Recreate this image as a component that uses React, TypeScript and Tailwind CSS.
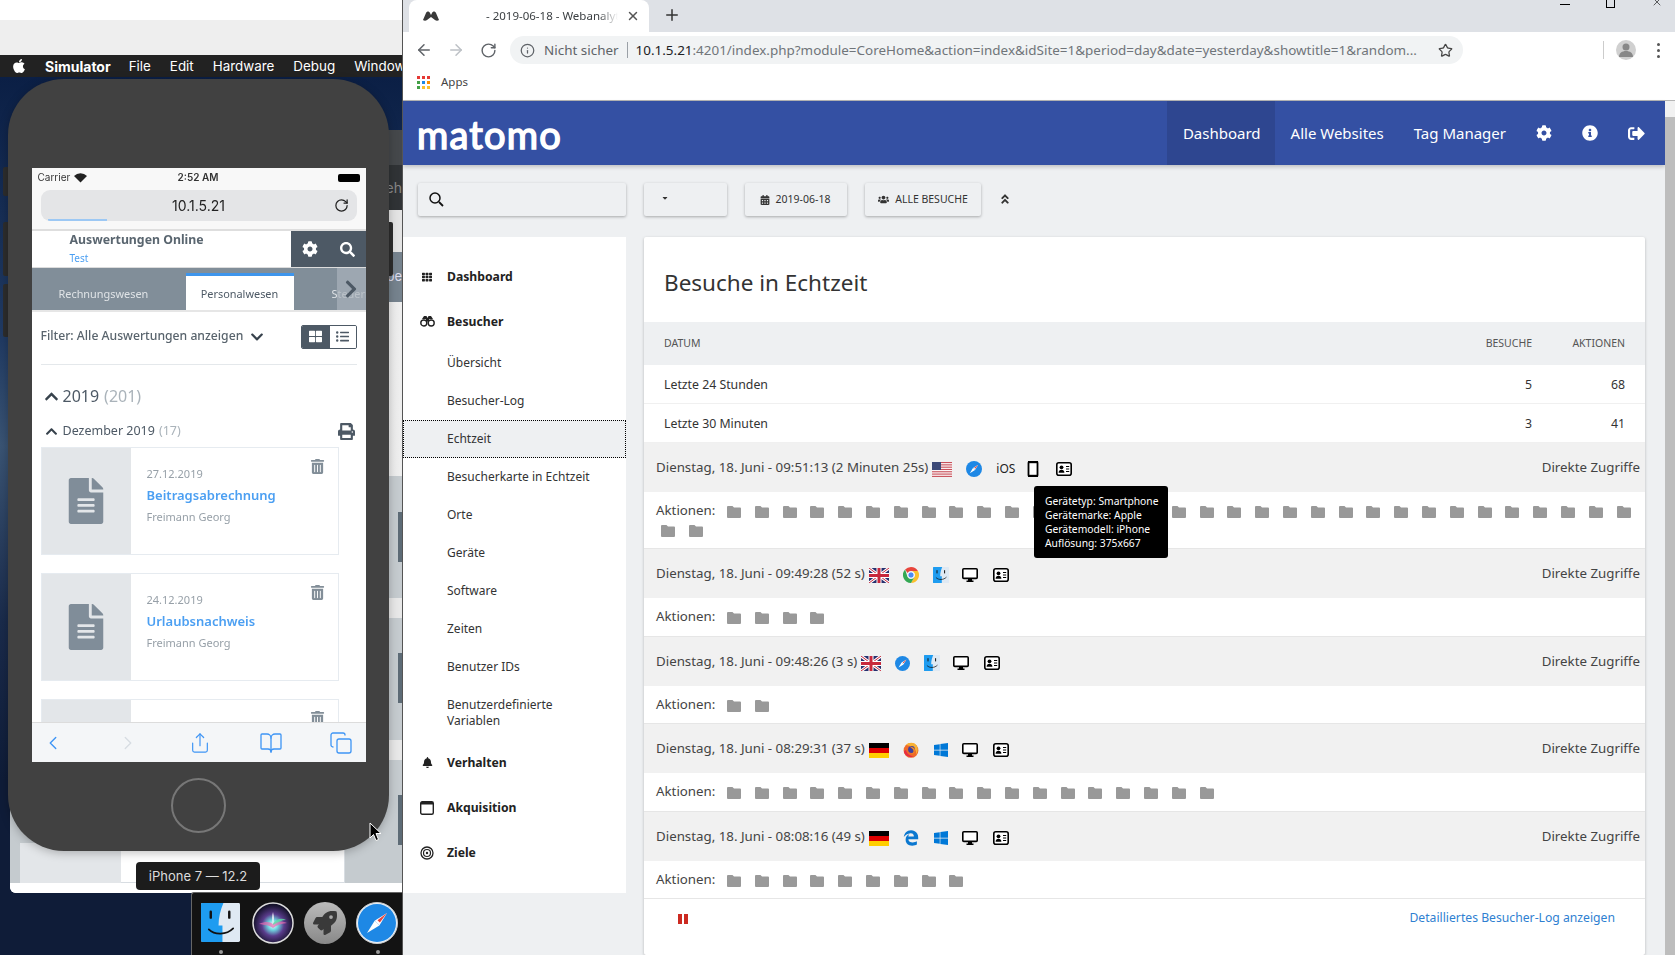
import React from "react";
import { FaApple, FaCog, FaSearch, FaChevronDown, FaChevronUp, FaChevronRight, FaPrint, FaTrashAlt, FaFileAlt, FaTh, FaListUl, FaThLarge, FaInfoCircle, FaSignOutAlt, FaBell, FaWindows, FaEdgeLegacy, FaRocket, FaUsers, FaCalendarAlt, FaCaretDown, FaAngleDoubleUp } from "react-icons/fa";
import { ArrowLeft, ArrowRight, RotateCw, Info, Star, ChevronLeft, ChevronRight, Share, BookOpen, Copy, Plus, X } from "lucide-react";

const Folder = () => (
  <svg width="14" height="12" viewBox="0 0 14 12" className="block">
    <path d="M1 0h4.500l1.500 1.600h6a1 1 0 0 1 1 1V11a1 1 0 0 1-1 1H1a1 1 0 0 1-1-1V1a1 1 0 0 1 1-1z" fill="#999" />
  </svg>
);

const FlagUS = () => (
  <svg width="20" height="15" viewBox="0 0 20 15" className="block shrink-0">
    <rect width="20" height="15" fill="#fff" />
    {[0, 2, 4, 6, 8, 10, 12].map((i) => (
      <rect key={i} y={i * 1.15} width="20" height="1.150" fill="#c8505a" />
    ))}
    <rect width="9" height="8" fill="#3c4a78" />
  </svg>
);
const FlagUK = () => (
  <svg width="20" height="15" viewBox="0 0 20 15" className="block shrink-0">
    <rect width="20" height="15" fill="#27306e" />
    <path d="M0 0l20 15M20 0L0 15" stroke="#fff" strokeWidth="3" />
    <path d="M0 0l20 15M20 0L0 15" stroke="#c8283c" strokeWidth="1" />
    <path d="M10 0v15M0 7.500h20" stroke="#fff" strokeWidth="5" />
    <path d="M10 0v15M0 7.500h20" stroke="#c8283c" strokeWidth="3" />
  </svg>
);
const FlagDE = () => (
  <svg width="20" height="15" viewBox="0 0 20 15" className="block shrink-0">
    <rect width="20" height="5" fill="#000" />
    <rect y="5" width="20" height="5" fill="#dd0000" />
    <rect y="10" width="20" height="5" fill="#ffce00" />
  </svg>
);
const Safari = ({ s = 16 }: { s?: number }) => (
  <svg width={s} height={s} viewBox="0 0 16 16" className="block shrink-0">
    <circle cx="8" cy="8" r="8" fill="#1e88e5" />
    <path d="M12.200 3.800L7 7l2 2z" fill="#fff" />
    <path d="M3.800 12.200L7 7l2 2z" fill="#fff" />
    <path d="M12.200 3.800L8.200 6.800l1 1z" fill="#e8453c" />
  </svg>
);
const Chrome = () => (
  <svg width="16" height="16" viewBox="0 0 16 16" className="block shrink-0">
    <path d="M8 0a8 8 0 0 1 6.930 4H8a4 4 0 0 0-3.460 2L2.100 2.600A8 8 0 0 1 8 0z" fill="#e8453c" />
    <path d="M14.930 4A8 8 0 0 1 8 16l3.460-6A4 4 0 0 0 11.460 6 4 4 0 0 0 8 4z" fill="#fbc02d" />
    <path d="M2.100 2.600L4.540 10A4 4 0 0 0 11.460 10L8 16A8 8 0 0 1 2.100 2.600z" fill="#34a853" />
    <circle cx="8" cy="8" r="3.200" fill="#4a8af4" stroke="#fff" />
  </svg>
);
const Firefox = () => (
  <svg width="16" height="16" viewBox="0 0 16 16" className="block shrink-0">
    <circle cx="8" cy="8.400" r="7.400" fill="#ef6a2a" />
    <path d="M3 3c3-3.500 9-3 11 1 1.500 3 .5 7-1 8.500C14 7 10 4 3 3z" fill="#f9b233" />
    <circle cx="8.500" cy="7.500" r="3.400" fill="#3f3f9f" />
    <path d="M6 4.500c3 0 6 1 6 4s-3 4-5 3.500c2 0 3.500-1 3.500-3S8 5.500 6 4.500z" fill="#f58a1f" />
    <path d="M1 9c0 5 6 7 10 5.500C7 14 4 12 3 8z" fill="#e62d45" />
  </svg>
);
const Finder = ({ s = 16 }: { s?: number }) => (
  <svg width={s} height={s} viewBox="0 0 40 40" className="block shrink-0">
    <rect width="40" height="40" rx="1.500" fill="#dfe9f3" />
    <path d="M1.500 0H23c-3 7-5 15-5 23h4v17H1.500A1.500 1.500 0 0 1 0 38.500v-37A1.500 1.500 0 0 1 1.500 0z" fill="#1e9cf0" />
    <path d="M10 9v6M29 9v6" stroke="#111" strokeWidth="2.500" strokeLinecap="round" />
    <path d="M8 27c6 6 18 6 25-1" stroke="#111" strokeWidth="1.800" fill="none" strokeLinecap="round" />
  </svg>
);
const Monitor = () => (
  <svg width="16" height="16" viewBox="0 0 16 16" className="block shrink-0">
    <rect x="0.800" y="1.800" width="14.400" height="9.600" rx="1" fill="#fff" stroke="#000" strokeWidth="1.600" />
    <path d="M6 12h4v1.500h1.500V15h-7v-1.500H6z" fill="#000" />
  </svg>
);
const Phone = () => (
  <svg width="16" height="16" viewBox="0 0 16 16" className="block shrink-0">
    <rect x="3.500" y="0.500" width="9" height="15" rx="1.500" fill="#fff" stroke="#000" strokeWidth="1.800" />
    <rect x="3" y="0" width="10" height="2.200" fill="#000" />
    <rect x="3" y="13.800" width="10" height="2.200" fill="#000" />
  </svg>
);
const Card = () => (
  <svg width="16" height="14" viewBox="0 0 16 14" className="block shrink-0">
    <rect x="0.800" y="0.800" width="14.400" height="12.400" rx="2" fill="#fff" stroke="#000" strokeWidth="1.600" />
    <circle cx="5.500" cy="5.300" r="1.900" fill="#000" />
    <path d="M2.600 10.800c0-2 1.300-3 2.900-3s2.900 1 2.900 3z" fill="#000" />
    <path d="M10 4.500h3.200M10 7h3.200M10 9.500h3.200" stroke="#000" strokeWidth="1.100" />
  </svg>
);
const Binoculars = () => (
  <svg width="15" height="11" viewBox="0 0 15 11" className="block">
    <path d="M2 3l2-3h2.500l1 2 1-2H11l2 3z" fill="#222" />
    <circle cx="3.800" cy="7" r="3" fill="#fff" stroke="#222" strokeWidth="1.400" />
    <circle cx="11.200" cy="7" r="3" fill="#fff" stroke="#222" strokeWidth="1.400" />
    <rect x="6" y="2.500" width="3" height="3" fill="#222" />
  </svg>
);
const Target = () => (
  <svg width="14" height="14" viewBox="0 0 14 14" className="block">
    <circle cx="7" cy="7" r="6" fill="none" stroke="#222" strokeWidth="1.300" />
    <circle cx="7" cy="7" r="3.500" fill="none" stroke="#222" strokeWidth="1.200" />
    <circle cx="7" cy="7" r="1.200" fill="#222" />
  </svg>
);
const WinIcon = () => <FaWindows size={16} color="#0078d7" className="shrink-0" />;
const OS = () => <Finder />;

const visits = [
  { t: "Dienstag, 18. Juni - 09:51:13 (2 Minuten 25s)", flag: <FlagUS />, b: <Safari />, o: <span className="block w-4 text-center text-[12px] leading-4 text-[#222]">iOS</span>, d: <Phone />, n: 35, h: "h-[57px]" },
  { t: "Dienstag, 18. Juni - 09:49:28 (52 s)", flag: <FlagUK />, b: <Chrome />, o: <OS />, d: <Monitor />, n: 4, h: "h-[39px]" },
  { t: "Dienstag, 18. Juni - 09:48:26 (3 s)", flag: <FlagUK />, b: <Safari s={15} />, o: <OS />, d: <Monitor />, n: 2, h: "h-[38px]" },
  { t: "Dienstag, 18. Juni - 08:29:31 (37 s)", flag: <FlagDE />, b: <Firefox />, o: <WinIcon />, d: <Monitor />, n: 18, h: "h-[39px]" },
  { t: "Dienstag, 18. Juni - 08:08:16 (49 s)", flag: <FlagDE />, b: <FaEdgeLegacy size={16} color="#0b78d0" className="shrink-0" />, o: <WinIcon />, d: <Monitor />, n: 9, h: "h-[38px]" },
];

const subItems = ["Übersicht", "Besucher-Log", "Echtzeit", "Besucherkarte in Echtzeit", "Orte", "Geräte", "Software", "Zeiten", "Benutzer IDs"];

function TopItem({ icon, label }: { icon: React.ReactNode; label: string }) {
  return (
    <div className="flex h-[45px] items-center">
      <span className="flex w-[44px] justify-center pl-[4px] text-[#222]">{icon}</span>
      <span className="pt-[1px] text-[12.200px] font-bold text-[#222]">{label}</span>
    </div>
  );
}

function DocCard({ date, title, author = true }: { date?: string; title?: string; author?: boolean }) {
  return (
    <div className="flex h-[108px] w-[298px] shrink-0 border border-[#e6ebf0]">
      <div className="flex w-[89px] shrink-0 items-center justify-center bg-[#e3e6e9]">
        <FaFileAlt size={46} color="#808d99" />
      </div>
      <div className="relative flex-1 pl-[16px] pt-[17px]">
        {author && (
          <>
            <div className="text-[11px] leading-[18px] text-[#97a0a8]">{date}</div>
            <div className="text-[13px] font-semibold leading-[24px] text-[#4b9ff2]">{title}</div>
            <div className="text-[11px] leading-[20px] text-[#97a0a8]">Freimann Georg</div>
          </>
        )}
        <FaTrashAlt size={15} color="#828e98" className="absolute right-[13px] top-[11px]" />
      </div>
    </div>
  );
}

function Mac() {
  return (
    <div className="relative flex h-[955px] w-[402px] shrink-0 flex-col overflow-hidden font-['Inter',sans-serif]">
      <div className="h-[20px] bg-white" />
      <div className="h-[35px] bg-[#eeeeee]" />
      <div className="flex h-[22px] items-center overflow-hidden whitespace-nowrap bg-[#222222] text-[13.400px] text-white">
        <FaApple size={16} className="ml-[11px] mr-[18px] shrink-0" />
        <span className="mr-[18px] shrink-0 text-[14px] font-bold">Simulator</span>
        <span className="mr-[19px] shrink-0">File</span>
        <span className="mr-[19px] shrink-0">Edit</span>
        <span className="mr-[19px] shrink-0">Hardware</span>
        <span className="mr-[19px] shrink-0">Debug</span>
        <span className="shrink-0">Window</span>
      </div>
      <div className="relative flex-1 bg-[linear-gradient(180deg,#0b1f45_0%,#213b63_30%,#3a5474_42%,#1a2b4b_62%,#0f1c38_80%)]">
        {/* window behind the simulator */}
        <div className="absolute left-[10px] top-[53px] flex h-[763px] w-[392px] flex-col overflow-hidden rounded-bl-[6px] bg-white">
          <div className="h-[35px] bg-[#45484b]" />
          <div className="flex h-[45px] items-center justify-end bg-[#303336] text-[14px] text-[#888]">beh</div>
          <div className="h-[42px] bg-[#e4e4e4]" />
          <div className="flex h-[50px] items-center justify-end bg-[#76838e] text-[13px] text-[#dde]">pe</div>
          <div className="h-[174px] bg-[linear-gradient(90deg,#ddd,#eee)]" />
          <div className="h-[122px] bg-[#c5cbcf]" />
          <div className="h-[20px] bg-[#e8e8e8]" />
          <div className="h-[122px] bg-[#c5cbcf]" />
          <div className="h-[20px] bg-[#e8e8e8]" />
          <div className="h-[123px] bg-[#c5cbcf]" />
          <div className="flex-1 bg-white" />
          <div className="absolute bottom-[10px] left-[10px] flex h-[40px] w-[325px]">
            <div className="w-[101px] bg-[#e3e6e9]" />
            <div className="flex-1 border-b border-r border-[#d8dde2] bg-white" />
          </div>
          <div className="absolute right-0 top-[382px] h-[50px] w-[4px] bg-[#5d6b76]" />
          <div className="absolute right-0 top-[523px] h-[50px] w-[4px] bg-[#5d6b76]" />
          <div className="absolute right-0 top-[665px] h-[50px] w-[4px] bg-[#5d6b76]" />
        </div>

        {/* side buttons */}
        <div className="absolute left-[3px] top-[90px] h-[29px] w-[6px] rounded-l-[2px] bg-[#2d2d2d]" />
        <div className="absolute left-[3px] top-[145px] h-[54px] w-[6px] rounded-l-[2px] bg-[#2d2d2d]" />
        <div className="absolute left-[3px] top-[207px] h-[53px] w-[6px] rounded-l-[2px] bg-[#2d2d2d]" />
        <div className="absolute left-[388px] top-[145px] h-[54px] w-[5px] rounded-r-[2px] bg-[#2d2d2d]" />

        {/* phone */}
        <div className="absolute left-[8px] top-[2px] flex h-[772px] w-[381px] flex-col items-center rounded-[56px] bg-[#414141] pt-[89px] shadow-[0_2px_10px_rgba(0,0,0,0.25)]">
          <div className="flex h-[594px] w-[334px] shrink-0 flex-col overflow-hidden bg-white font-['Noto_Sans',sans-serif] blur-[0.3px]">
            <div className="relative flex h-[22px] items-start justify-between bg-[#f8f8f8] pl-[6px] pr-[5px] pt-[2px] font-['Inter',sans-serif] text-[10px] text-[#333]">
              <span className="flex items-center gap-1">Carrier
                <svg width="13" height="10" viewBox="0 0 13 10"><path d="M6.500 9.500L0 3a9.200 9.200 0 0 1 13 0z" fill="#222" /></svg>
              </span>
              <span className="absolute left-[146px] font-semibold">2:52 AM</span>
              <span className="mr-[1px] mt-[4px] h-[8px] w-[22px] rounded-[2px] bg-black" />
            </div>
            <div className="h-[41px] border-b-2 border-[#dedede] bg-[#f8f8f8] px-[9px]">
              <div className="relative flex h-[31px] items-center justify-center overflow-hidden rounded-[9px] bg-[#e4e5e7] font-['Inter',sans-serif] text-[14px] text-[#222]">
                10.1.5.21
                <RotateCw size={15} className="absolute right-[8px]" color="#222" />
                <span className="absolute bottom-0 left-[7px] h-[2px] w-[59px] bg-[#9cc8f4]" />
              </div>
            </div>
            <div className="flex h-[37px] items-stretch border-b border-[#dcdcdc]">
              <div className="flex-1 pl-[38px]">
                <div className="text-[12.300px] font-bold leading-[18px] text-[#5a6670]">Auswertungen Online</div>
                <div className="mt-[2px] text-[10px] leading-[14px] text-[#4b9ff2]">Test</div>
              </div>
              <div className="flex w-[75px] items-center justify-between bg-[#4d5965] px-[11px] text-white">
                <FaCog size={16} />
                <FaSearch size={15} />
              </div>
            </div>
            <div className="relative flex h-[44px] items-end overflow-hidden border-b-2 border-[#e6e6e6] bg-[#818e99] text-[10.900px]">
              <span className="flex h-[37px] w-[154px] shrink-0 items-center pl-[27px] pt-[6px] text-[#dfe3e6]">Rechnungswesen</span>
              <span className="flex h-[37px] w-[108px] shrink-0 items-center justify-center border-t-[3px] border-[#3e95ec] bg-white pt-[3px] text-[#4d5965]">Personalwesen</span>
              <span className="flex h-[37px] shrink-0 items-center pl-[38px] pt-[6px] text-[#dfe3e6]">Steuern</span>
              <span className="absolute bottom-0 right-0 top-0 flex w-[29px] items-center justify-center bg-[#a9b2ba]/70 text-[#4d5965]">
                <FaChevronRight size={20} />
              </span>
            </div>
            <div className="flex-1 overflow-hidden px-[9px]">
              <div className="flex h-[53px] items-center border-b border-[#e4e8eb] pb-[3px]">
                <span className="text-[12.200px] font-medium text-[#59646d]">Filter: Alle Auswertungen anzeigen</span>
                <FaChevronDown size={14} color="#37424c" className="ml-[7px]" />
                <span className="ml-auto flex h-[24px] w-[56px] overflow-hidden rounded-[2px] border border-[#4d5965]">
                  <span className="flex w-[28px] items-center justify-center bg-[#4d5965]"><FaThLarge size={13} color="#fff" /></span>
                  <span className="flex flex-1 items-center justify-center bg-white"><FaListUl size={13} color="#4d5965" /></span>
                </span>
              </div>
              <div className="mt-[19px] flex h-[24px] items-center pl-[3px] text-[16px] text-[#4d5965]">
                <FaChevronUp size={15} color="#37424c" className="mr-[4px]" />
                2019 <span className="ml-[5px] text-[#aab3ba]">(201)</span>
              </div>
              <div className="mt-[11px] flex h-[24px] items-center pl-[4px] text-[12.500px] text-[#4d5965]">
                <FaChevronUp size={13} color="#37424c" className="mr-[5px]" />
                Dezember 2019 <span className="ml-[4px] text-[#aab3ba]">(17)</span>
                <FaPrint size={17} color="#4d5965" className="ml-auto mr-[2px]" />
              </div>
              <div className="mt-[4px] flex flex-col gap-[18px]">
                <DocCard date="27.12.2019" title="Beitragsabrechnung" />
                <DocCard date="24.12.2019" title="Urlaubsnachweis" />
                <DocCard author={false} />
              </div>
            </div>
            <div className="flex h-[40px] shrink-0 items-center border-t border-[#dcdcdc] bg-[#f4f6f8] pl-[10px] pr-[13px] text-[#3e95f5]">
              <ChevronLeft size={22} strokeWidth={1.500} />
              <ChevronRight size={22} strokeWidth={1.500} className="ml-[53px] text-[#d7dde3]" />
              <Share size={22} strokeWidth={1.300} className="ml-[50px]" />
              <BookOpen size={24} strokeWidth={1.300} className="ml-[48px]" />
              <Copy size={24} strokeWidth={1.300} className="ml-auto" />
            </div>
          </div>
          <div className="mt-[16px] h-[55px] w-[55px] rounded-full border-[2px] border-[#777]" />
        </div>

        {/* device tooltip */}
        <div className="absolute left-[136px] top-[785px] flex h-[28px] w-[124px] items-center justify-center rounded-[4px] bg-[#1c1c1c] pt-[2px] text-[13px] text-[#ddd]">iPhone 7 — 12.2</div>

        {/* dock */}
        <div className="absolute left-[191px] top-[815px] flex h-[63px] w-[211px] items-start gap-[12px] rounded-tl-[3px] border-l border-t border-[#666] bg-[#131313] pl-[9px] pt-[10px]">
          <Finder s={39} />
          <svg width="42" height="42" viewBox="0 0 42 42" className="-mt-[1px] shrink-0">
            <defs>
              <radialGradient id="siri" cx="50%" cy="55%" r="50%">
                <stop offset="0%" stopColor="#fff" />
                <stop offset="25%" stopColor="#6fd6e0" />
                <stop offset="55%" stopColor="#5a3c8c" />
                <stop offset="100%" stopColor="#15122b" />
              </radialGradient>
            </defs>
            <circle cx="21" cy="21" r="20" fill="url(#siri)" stroke="#ddd" strokeWidth="1.500" />
            <path d="M7 22c7-3 11-2 14 0 3-3 8-3 14-1-6 1-10 2-14 5-4-3-8-3-14-4z" fill="#e86ab0" opacity="0.700" />
            <path d="M21 21c3-3 8-6 13-3-4 0-8 2-13 5z" fill="#5fe0a8" opacity="0.800" />
            <path d="M21 10c1 5 1 8 0 12-1-4-1-8 0-12z" fill="#fff" />
          </svg>
          <span className="-ml-[2px] -mt-[1px] flex h-[42px] w-[42px] shrink-0 items-center justify-center rounded-full bg-[linear-gradient(180deg,#bcbcbc,#888)]">
            <FaRocket size={24} color="#3a3a3a" />
          </span>
          <span className="-ml-[2px] -mt-[1px] flex h-[42px] w-[42px] shrink-0 items-center justify-center rounded-full border border-[#ccc] bg-[#e8f0f8]">
            <Safari s={38} />
          </span>
          <span className="absolute left-[27px] top-[57px] h-[4px] w-[4px] rounded-full bg-[#999]" />
          <span className="absolute left-[184px] top-[57px] h-[4px] w-[4px] rounded-full bg-[#999]" />
        </div>

        {/* mouse pointer */}
        <svg width="14" height="20" viewBox="0 0 14 20" className="absolute left-[369px] top-[745px]">
          <path d="M1 1v15l3.500-3.500 2.500 6 2.500-1-2.500-6H12z" fill="#000" stroke="#fff" strokeWidth="1" />
        </svg>
      </div>
    </div>
  );
}

function Chromium() {
  return (
    <div className="flex h-[955px] flex-1 flex-col overflow-hidden border-l border-[#555] bg-white font-['Noto_Sans',sans-serif]">
      <div className="relative flex h-[32px] shrink-0 items-stretch bg-[#dee1e6] pl-[6px] text-[#3c4043]">
        <div className="flex w-[240px] items-center rounded-t-[8px] bg-white pl-[14px] pr-[9px] text-[11.500px]">
          <svg width="16" height="10" viewBox="0 0 16 10" className="shrink-0"><path d="M0 9l3-7c1-2 3-2 4 0l1 2 1-2c1-2 3-2 4 0l3 7c-1 1-3 1-4 0L8 6l-4 3c-1 1-3 1-4 0z" fill="#3a3a3a" /></svg>
          <span className="ml-[47px] w-[132px] shrink-0 overflow-hidden whitespace-nowrap [mask-image:linear-gradient(90deg,#000_85%,transparent)]">- 2019-06-18 - Webanalytics</span>
          <X size={14} strokeWidth={2.500} className="ml-auto shrink-0 text-[#555]" />
        </div>
        <Plus size={18} strokeWidth={2} className="ml-[14px] mt-[6px] text-[#333]" />
        <div className="absolute right-0 top-0 flex h-[8px] w-[115px] items-start overflow-hidden">
          <span className="mr-[36px] mt-[4px] h-[1px] w-[10px] shrink-0 bg-black" />
          <span className="-mt-[2px] mr-[36px] h-[10px] w-[9px] shrink-0 border border-black" />
          <X size={12} strokeWidth={1.200} className="-mt-[4px] shrink-0 text-black" />
        </div>
      </div>
      <div className="flex h-[36px] shrink-0 items-center bg-white text-[#5f6368]">
        <ArrowLeft size={18} strokeWidth={2} className="ml-[12px]" />
        <ArrowRight size={18} strokeWidth={2} className="ml-[14px] text-[#bdc1c6]" />
        <RotateCw size={17} strokeWidth={2} className="ml-[15px]" />
        <div className="ml-[13px] flex h-[28px] w-[953px] items-center rounded-full bg-[#f1f3f4] pl-[10px] text-[13.450px]">
          <Info size={15} strokeWidth={2} />
          <span className="ml-[9px] text-[#5f6368]">Nicht sicher</span>
          <span className="ml-[8px] mr-[8px] h-[16px] w-px bg-[#9aa0a6]" />
          <span className="min-w-0 flex-1 truncate text-[#70757a]"><span className="text-[#202124]">10.1.5.21</span>:4201/index.php?module=CoreHome&amp;action=index&amp;idSite=1&amp;period=day&amp;date=yesterday&amp;showtitle=1&amp;random...</span>
          <Star size={15} strokeWidth={2} className="ml-[14px] mr-[10px] shrink-0 text-[#444]" />
        </div>
        <span className="ml-[140px] h-[18px] w-px bg-[#ccc]" />
        <span className="ml-[12px] flex h-[20px] w-[20px] items-center justify-center overflow-hidden rounded-full bg-[#d0d0d0]">
          <svg width="14" height="16" viewBox="0 0 14 16"><circle cx="7" cy="5" r="3.500" fill="#888" /><path d="M0 15c0-4 3-6 7-6s7 2 7 6z" fill="#888" /></svg>
        </span>
        <span className="ml-[21px] flex flex-col gap-[3px]">
          <i className="block h-[3px] w-[3px] rounded-full bg-[#555]" />
          <i className="block h-[3px] w-[3px] rounded-full bg-[#555]" />
          <i className="block h-[3px] w-[3px] rounded-full bg-[#555]" />
        </span>
      </div>
      <div className="flex h-[33px] shrink-0 items-center border-b border-[#b5b5b5] bg-white pb-[4px] pl-[14px] text-[11.500px] text-[#444]">
        <span className="grid grid-cols-3 gap-[2px]">
          {["#e53935", "#e53935", "#e53935", "#43a047", "#1e88e5", "#fb8c00", "#43a047", "#fbc02d", "#fbc02d"].map((c, i) => (
            <i key={i} className="block h-[3px] w-[3px]" style={{ backgroundColor: c }} />
          ))}
        </span>
        <span className="ml-[11px]">Apps</span>
      </div>
      <div className="flex min-h-0 flex-1">
        <div className="flex min-w-0 flex-1 flex-col bg-[#eef0f2]">
          <div className="flex h-[64px] shrink-0 items-stretch bg-[#3450a3] text-white shadow-[0_2px_4px_rgba(0,0,0,0.2)]">
            <div className="ml-[14px] flex items-center pt-[2px] font-['Lato',sans-serif] text-[38px] font-normal leading-none tracking-[1.200px] [-webkit-text-stroke:1.500px_white]">matomo</div>
            <div className="ml-auto flex items-center bg-[#2e4690] pl-[16px] pr-[14px] text-[15px]">Dashboard</div>
            <div className="ml-[16px] flex items-center text-[15px]">Alle Websites</div>
            <div className="ml-[30px] flex items-center text-[15px]">Tag Manager</div>
            <div className="ml-[30px] mr-[20px] flex items-center gap-[30px]">
              <FaCog size={16} />
              <FaInfoCircle size={16} />
              <FaSignOutAlt size={17} />
            </div>
          </div>
          <div className="mt-[18px] flex h-[33px] shrink-0 items-stretch pl-[15px] text-[10.500px] text-[#333]">
            <div className="flex w-[208px] items-center rounded-[2px] bg-[#eef0f2] pl-[11px] shadow-[0_1px_3px_rgba(0,0,0,0.3)]"><svg width="15" height="15" viewBox="0 0 15 15"><circle cx="6" cy="6" r="5" fill="none" stroke="#111" strokeWidth="1.500" /><path d="M10 10l4 4" stroke="#111" strokeWidth="1.800" /></svg></div>
            <div className="ml-[18px] flex w-[83px] items-start rounded-[2px] bg-[#eef0f2] pl-[17px] pt-[11px] shadow-[0_1px_3px_rgba(0,0,0,0.3)]"><FaCaretDown size={8} /></div>
            <div className="ml-[18px] flex w-[102px] items-center justify-center gap-[6px] rounded-[2px] bg-[#eef0f2] pr-[2px] shadow-[0_1px_3px_rgba(0,0,0,0.3)]"><FaCalendarAlt size={10} />2019-06-18</div>
            <div className="ml-[18px] flex w-[116px] items-center justify-center gap-[6px] rounded-[2px] bg-[#eef0f2] shadow-[0_1px_3px_rgba(0,0,0,0.3)]"><FaUsers size={11} />ALLE BESUCHE</div>
            <div className="ml-[18px] flex items-center pb-[2px]"><FaAngleDoubleUp size={12} /></div>
          </div>
          <div className="mt-[21px] flex min-h-0 flex-1 items-start gap-[18px]">
            <div className="h-[656px] w-[223px] shrink-0 bg-white pt-[17px]">
              <TopItem icon={<FaTh size={10} />} label="Dashboard" />
              <TopItem icon={<Binoculars />} label="Besucher" />
              {subItems.map((s) =>
                s === "Echtzeit" ? (
                  <div key={s} className="flex h-[38px] items-center border border-dotted border-black bg-[#eef0f2] pl-[43px] text-[12px] text-[#333]">{s}</div>
                ) : (
                  <div key={s} className="flex h-[38px] items-center pl-[44px] text-[12px] text-[#333]">{s}</div>
                )
              )}
              <div className="flex h-[54px] items-center pl-[44px] text-[12px] leading-[16px] text-[#333]">Benutzerdefinierte<br />Variablen</div>
              <TopItem icon={<FaBell size={11} />} label="Verhalten" />
              <TopItem icon={<svg width="14" height="14" viewBox="0 0 14 14"><rect x="0.700" y="0.700" width="12.600" height="12.600" rx="1.500" fill="none" stroke="#222" strokeWidth="1.400" /><rect x="1" y="1" width="12" height="2.500" fill="#222" /></svg>} label="Akquisition" />
              <TopItem icon={<Target />} label="Ziele" />
            </div>
            <div className="h-[718px] w-[1001px] shrink-0 overflow-hidden rounded-[2px] bg-white text-[#444] shadow-[0_1px_3px_rgba(0,0,0,0.25)]">
              <div className="flex h-[85px] items-center pl-[20px] pt-[6px] text-[22.500px] text-[#333]">Besuche in Echtzeit</div>
              <div className="flex h-[43px] items-center bg-[#eef0f2] pl-[20px] text-[10.500px] text-[#555]">
                <span className="flex-1">DATUM</span>
                <span className="w-[60px] text-right">BESUCHE</span>
                <span className="ml-[33px] mr-[20px] w-[60px] text-right">AKTIONEN</span>
              </div>
              {[["Letzte 24 Stunden", "5", "68"], ["Letzte 30 Minuten", "3", "41"]].map((r) => (
                <div key={r[0]} className="flex h-[39px] items-center border-b border-[#f0f0f0] pl-[20px] pt-[2px] text-[12.300px] text-[#333]">
                  <span className="flex-1">{r[0]}</span>
                  <span className="w-[60px] text-right">{r[1]}</span>
                  <span className="ml-[33px] mr-[20px] w-[60px] text-right">{r[2]}</span>
                </div>
              ))}
              {visits.map((v) => (
                <div key={v.t}>
                  <div className="flex h-[49px] items-center bg-[#f1f1f1] pl-[12px] pr-[5px] pt-[1px] text-[13.300px] text-[#444]">
                    <span className="whitespace-nowrap">{v.t}</span>
                    <span className="ml-[4px] flex items-center pt-[2px]">
                      {v.flag}
                      <span className="ml-[14px]">{v.b}</span>
                      <span className="ml-[14px]">{v.o}</span>
                      <span className="ml-[13px]">{v.d}</span>
                      <span className="ml-[15px]"><Card /></span>
                    </span>
                    <span className="ml-auto">Direkte Zugriffe</span>
                  </div>
                  <div className={`flex flex-wrap content-center border-b border-[#e6e6e6] pl-[12px] ${v.h}`}>
                    <span className="flex h-[19px] w-[66px] items-center text-[13.300px]">Aktionen:</span>
                    {Array.from({ length: v.n }).map((_, i) => (
                      <span key={i} className="flex h-[19px] w-[27.800px] items-center pl-[5px] pt-[2px]"><Folder /></span>
                    ))}
                  </div>
                </div>
              ))}
              <div className="flex h-[50px] items-start pl-[34px] pt-[11px]">
                <span className="flex gap-[2px] pt-[4px]">
                  <i className="block h-[10px] w-[4px] bg-[#cc2a21]" />
                  <i className="block h-[10px] w-[4px] bg-[#cc2a21]" />
                </span>
                <span className="ml-auto mr-[30px] text-[12.200px] leading-[15px] text-[#2f7fd1]">Detailliertes Besucher-Log anzeigen</span>
              </div>
            </div>
          </div>
        </div>
        <div className="w-[10px] shrink-0 bg-[#f1f1f1]">
          <div className="mt-[16px] h-full bg-[#bdbdbd]" />
        </div>
      </div>
      {/* tooltip */}
      <div className="absolute left-[1034px] top-[486px] h-[72px] w-[134px] whitespace-nowrap rounded-[3px] bg-black px-[11px] py-[8px] text-[10.300px] leading-[14px] text-white">
        Gerätetyp: Smartphone<br />Gerätemarke: Apple<br />Gerätemodell: iPhone<br />Auflösung: 375x667
      </div>
    </div>
  );
}

export default function App() {
  return (
    <div className="relative flex h-[955px] w-[1675px] overflow-hidden">
      <Mac />
      <Chromium />
    </div>
  );
}
